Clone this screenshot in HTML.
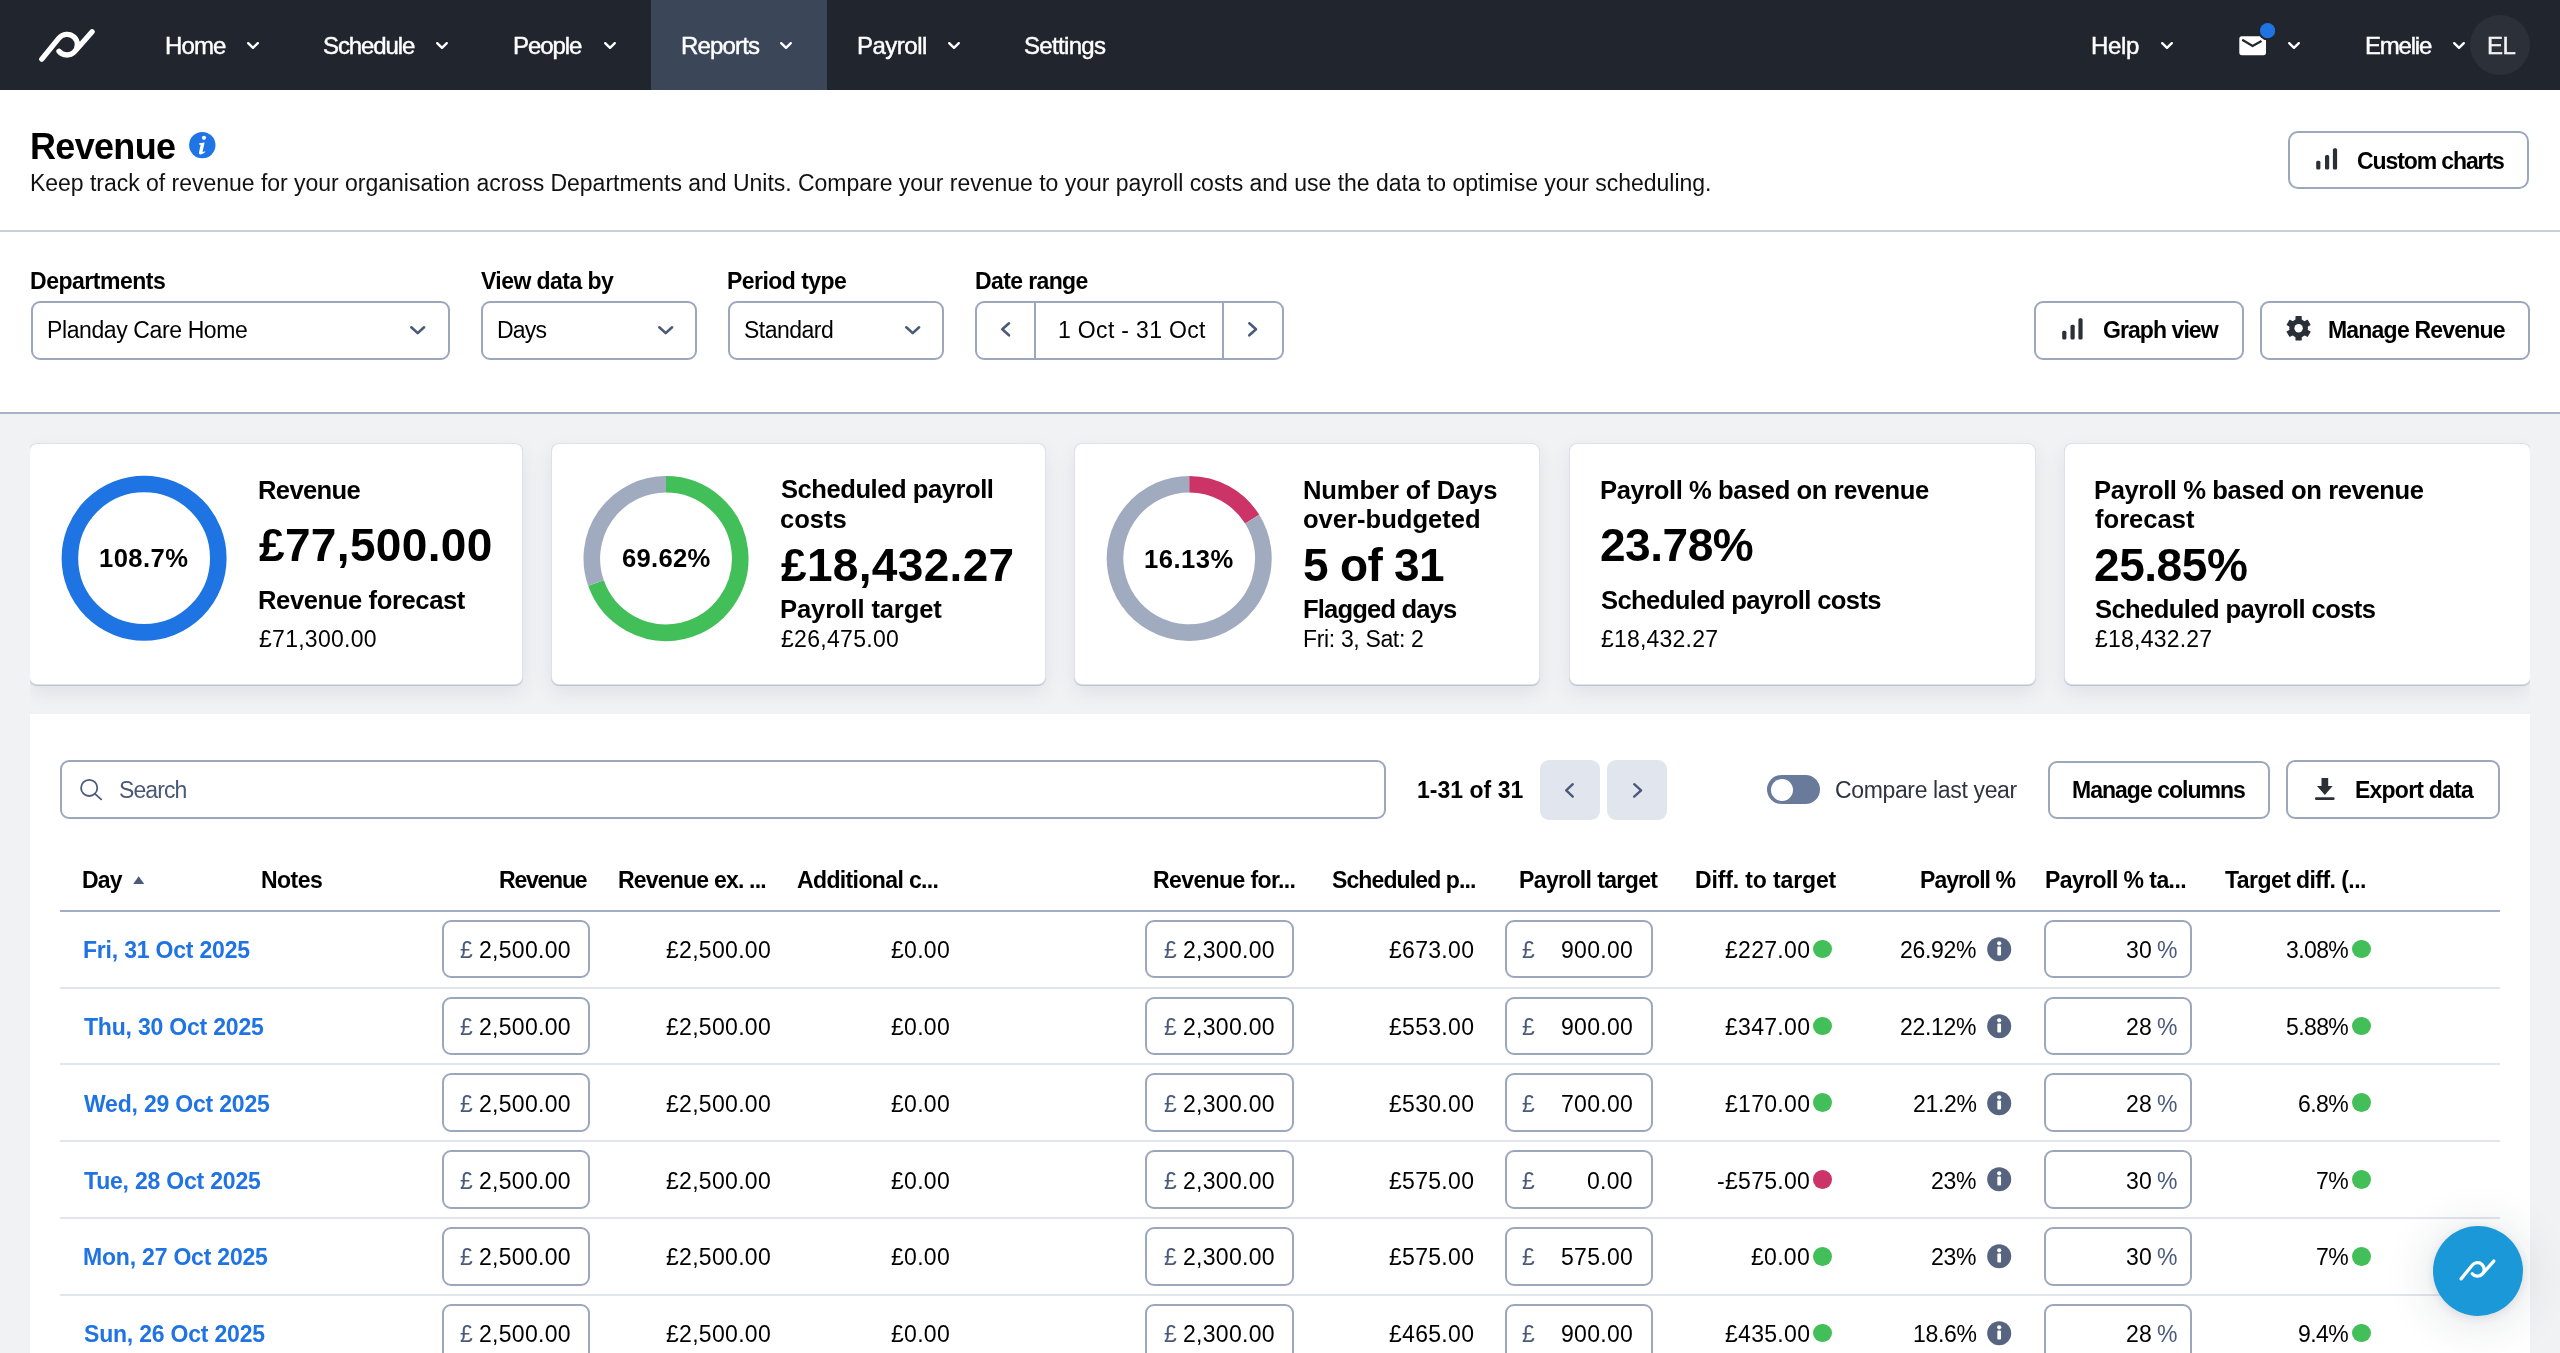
<!DOCTYPE html>
<html><head><meta charset="utf-8"><title>Revenue</title>
<style>
html,body{margin:0;padding:0}
body{width:2560px;height:1353px;overflow:hidden;position:relative;background:#f1f2f4;font-family:"Liberation Sans", sans-serif}
.t{position:absolute;white-space:nowrap;line-height:1;will-change:transform}
</style></head><body>
<div style="position:absolute;left:0.00px;top:0.00px;width:2560.00px;height:90.00px;background:#21252e"></div>
<div style="position:absolute;left:651.00px;top:0.00px;width:176.00px;height:90.00px;background:#3c4659"></div>
<svg style="position:absolute;left:0.00px;top:0.00px;overflow:visible" width="130" height="90" viewBox="0 0 130 90"><path d="M41.8 59.2 L58.9 38.2 A10.35 10.35 0 1 1 59.0 51.2 M74.7 51.6 L92.1 31.8" fill="none" stroke="#fff" stroke-width="5.3" stroke-linecap="round" stroke-linejoin="round"/></svg>
<div class="t" style="left:165.00px;top:33.68px;font-size:24px;color:#fff;letter-spacing:-0.891px;-webkit-text-stroke:0.45px #fff">Home</div>
<div class="t" style="left:323.00px;top:33.68px;font-size:24px;color:#fff;letter-spacing:-1.104px;-webkit-text-stroke:0.45px #fff">Schedule</div>
<div class="t" style="left:513.00px;top:33.68px;font-size:24px;color:#fff;letter-spacing:-1.077px;-webkit-text-stroke:0.45px #fff">People</div>
<div class="t" style="left:680.50px;top:33.68px;font-size:24px;color:#fff;letter-spacing:-0.839px;-webkit-text-stroke:0.45px #fff">Reports</div>
<div class="t" style="left:857.00px;top:33.68px;font-size:24px;color:#fff;letter-spacing:-0.505px;-webkit-text-stroke:0.45px #fff">Payroll</div>
<div class="t" style="left:1024.00px;top:33.68px;font-size:24px;color:#fff;letter-spacing:-0.674px;-webkit-text-stroke:0.45px #fff">Settings</div>
<div class="t" style="left:2091.00px;top:33.68px;font-size:24px;color:#fff;letter-spacing:-0.337px;-webkit-text-stroke:0.45px #fff">Help</div>
<div class="t" style="left:2365.00px;top:33.68px;font-size:24px;color:#fff;letter-spacing:-1.202px;-webkit-text-stroke:0.45px #fff">Emelie</div>
<svg style="position:absolute;left:247.00px;top:42.00px;overflow:visible" width="12" height="7" viewBox="0 0 12 7"><polyline points="1.20,1.20 6.00,5.80 10.80,1.20" fill="none" stroke="#fff" stroke-width="2.4" stroke-linecap="round" stroke-linejoin="round"/></svg>
<svg style="position:absolute;left:436.00px;top:42.00px;overflow:visible" width="12" height="7" viewBox="0 0 12 7"><polyline points="1.20,1.20 6.00,5.80 10.80,1.20" fill="none" stroke="#fff" stroke-width="2.4" stroke-linecap="round" stroke-linejoin="round"/></svg>
<svg style="position:absolute;left:604.00px;top:42.00px;overflow:visible" width="12" height="7" viewBox="0 0 12 7"><polyline points="1.20,1.20 6.00,5.80 10.80,1.20" fill="none" stroke="#fff" stroke-width="2.4" stroke-linecap="round" stroke-linejoin="round"/></svg>
<svg style="position:absolute;left:780.00px;top:42.00px;overflow:visible" width="12" height="7" viewBox="0 0 12 7"><polyline points="1.20,1.20 6.00,5.80 10.80,1.20" fill="none" stroke="#fff" stroke-width="2.4" stroke-linecap="round" stroke-linejoin="round"/></svg>
<svg style="position:absolute;left:948.00px;top:42.00px;overflow:visible" width="12" height="7" viewBox="0 0 12 7"><polyline points="1.20,1.20 6.00,5.80 10.80,1.20" fill="none" stroke="#fff" stroke-width="2.4" stroke-linecap="round" stroke-linejoin="round"/></svg>
<svg style="position:absolute;left:2161.00px;top:42.00px;overflow:visible" width="12" height="7" viewBox="0 0 12 7"><polyline points="1.20,1.20 6.00,5.80 10.80,1.20" fill="none" stroke="#fff" stroke-width="2.4" stroke-linecap="round" stroke-linejoin="round"/></svg>
<svg style="position:absolute;left:2288.00px;top:42.00px;overflow:visible" width="12" height="7" viewBox="0 0 12 7"><polyline points="1.20,1.20 6.00,5.80 10.80,1.20" fill="none" stroke="#fff" stroke-width="2.4" stroke-linecap="round" stroke-linejoin="round"/></svg>
<svg style="position:absolute;left:2453.00px;top:42.00px;overflow:visible" width="12" height="7" viewBox="0 0 12 7"><polyline points="1.20,1.20 6.00,5.80 10.80,1.20" fill="none" stroke="#fff" stroke-width="2.4" stroke-linecap="round" stroke-linejoin="round"/></svg>
<div style="position:absolute;left:2470.00px;top:15.00px;width:60.00px;height:60.00px;background:#2c3039;border-radius:50%"></div>
<div class="t" style="left:2487.00px;top:33.68px;font-size:24px;color:#f2f2f2;letter-spacing:-0.600px;-webkit-text-stroke:0.45px #f2f2f2">EL</div>
<svg style="position:absolute;left:2236.00px;top:22.00px;overflow:visible" width="40" height="40" viewBox="0 0 40 40"><rect x="3.3" y="14.3" width="26.7" height="18.9" rx="2.6" fill="#fff"/>
<polyline points="6.2,17.8 16.6,23.9 25.5,19" fill="none" stroke="#21252e" stroke-width="2.2"/>
<circle cx="31.6" cy="8.7" r="9.6" fill="#21252e"/>
<circle cx="31.6" cy="8.7" r="7.6" fill="#1f73e2"/></svg>
<div style="position:absolute;left:0.00px;top:90.00px;width:2560.00px;height:140.00px;background:#fff"></div>
<div style="position:absolute;left:0.00px;top:230.00px;width:2560.00px;height:2.00px;background:#c9d0dc"></div>
<div class="t" style="left:30.00px;top:128.52px;font-size:36px;color:#000;letter-spacing:-0.674px;font-weight:bold">Revenue</div>
<svg style="position:absolute;left:188.00px;top:131.00px;overflow:visible" width="28" height="28" viewBox="0 0 28 28"><circle cx="14.3" cy="14.1" r="13.2" fill="#1f75e6"/>
<circle cx="16" cy="6.8" r="2.1" fill="#fff"/>
<path d="M11.2 12.2 L16.6 11.6 L14.6 20.5 Q14.5 21.6 16.9 20.2 L17.4 21 Q13.5 24.3 11.6 23.2 Q10.6 22.6 11.2 20.5 L12.6 14 L11.1 13.6 Z" fill="#fff"/></svg>
<div class="t" style="left:30.00px;top:171.53px;font-size:23px;color:#111;letter-spacing:-0.022px">Keep track of revenue for your organisation across Departments and Units. Compare your revenue to your payroll costs and use the data to optimise your scheduling.</div>
<div style="position:absolute;left:2288.00px;top:131.00px;width:241.00px;height:58.00px;border:2px solid #9ca7bc;border-radius:10px;box-sizing:border-box;background:#fff"></div>
<svg style="position:absolute;left:2314.00px;top:147.00px;overflow:visible" width="26" height="24" viewBox="0 0 26 24"><rect x="2.2" y="13.8" width="4.2" height="8.7" rx="1.5" fill="#2b2f38"/><rect x="11" y="7.9" width="4.2" height="14.6" rx="1.5" fill="#2b2f38"/><rect x="18.9" y="1.3" width="4.2" height="21.2" rx="1.5" fill="#2b2f38"/></svg>
<div class="t" style="left:2357.00px;top:149.53px;font-size:23px;color:#000;letter-spacing:-1.104px;font-weight:bold">Custom charts</div>
<div style="position:absolute;left:0.00px;top:232.00px;width:2560.00px;height:180.00px;background:#fff"></div>
<div style="position:absolute;left:0.00px;top:412.00px;width:2560.00px;height:2.00px;background:#a9b3c6"></div>
<div class="t" style="left:30.25px;top:270.13px;font-size:23px;color:#000;letter-spacing:-0.480px;font-weight:bold">Departments</div>
<div class="t" style="left:480.50px;top:270.13px;font-size:23px;color:#000;letter-spacing:-0.556px;font-weight:bold">View data by</div>
<div class="t" style="left:727.00px;top:270.13px;font-size:23px;color:#000;letter-spacing:-0.546px;font-weight:bold">Period type</div>
<div class="t" style="left:975.00px;top:270.13px;font-size:23px;color:#000;letter-spacing:-0.620px;font-weight:bold">Date range</div>
<div style="position:absolute;left:31.00px;top:300.50px;width:418.50px;height:59.00px;border:2px solid #9ca7bc;border-radius:9px;box-sizing:border-box;background:#fff"></div>
<div style="position:absolute;left:480.50px;top:300.50px;width:216.00px;height:59.00px;border:2px solid #9ca7bc;border-radius:9px;box-sizing:border-box;background:#fff"></div>
<div style="position:absolute;left:728.00px;top:300.50px;width:216.00px;height:59.00px;border:2px solid #9ca7bc;border-radius:9px;box-sizing:border-box;background:#fff"></div>
<div style="position:absolute;left:975.00px;top:300.50px;width:308.50px;height:59.00px;border:2px solid #9ca7bc;border-radius:9px;box-sizing:border-box;background:#fff"></div>
<div style="position:absolute;left:1034.30px;top:301.00px;width:2.00px;height:58.00px;background:#9ca7bc"></div>
<div style="position:absolute;left:1221.70px;top:301.00px;width:2.00px;height:58.00px;background:#9ca7bc"></div>
<div class="t" style="left:47.00px;top:318.83px;font-size:23px;color:#000;letter-spacing:-0.394px">Planday Care Home</div>
<div class="t" style="left:496.50px;top:318.83px;font-size:23px;color:#000;letter-spacing:-0.800px">Days</div>
<div class="t" style="left:743.80px;top:318.83px;font-size:23px;color:#000;letter-spacing:-0.508px">Standard</div>
<div class="t" style="left:1058.00px;top:318.83px;font-size:23px;color:#000;letter-spacing:0.326px">1 Oct - 31 Oct</div>
<svg style="position:absolute;left:410.00px;top:326.00px;overflow:visible" width="15.399999999999977" height="8.399999999999977" viewBox="0 0 15.399999999999977 8.399999999999977"><polyline points="1.30,1.30 7.70,7.10 14.10,1.30" fill="none" stroke="#4b5a7b" stroke-width="2.6" stroke-linecap="round" stroke-linejoin="round"/></svg>
<svg style="position:absolute;left:658.00px;top:326.00px;overflow:visible" width="15.399999999999977" height="8.399999999999977" viewBox="0 0 15.399999999999977 8.399999999999977"><polyline points="1.30,1.30 7.70,7.10 14.10,1.30" fill="none" stroke="#4b5a7b" stroke-width="2.6" stroke-linecap="round" stroke-linejoin="round"/></svg>
<svg style="position:absolute;left:905.30px;top:326.00px;overflow:visible" width="15.399999999999977" height="8.399999999999977" viewBox="0 0 15.399999999999977 8.399999999999977"><polyline points="1.30,1.30 7.70,7.10 14.10,1.30" fill="none" stroke="#4b5a7b" stroke-width="2.6" stroke-linecap="round" stroke-linejoin="round"/></svg>
<svg style="position:absolute;left:1000.50px;top:322.40px;overflow:visible" width="9.299999999999955" height="14.600000000000023" viewBox="0 0 9.299999999999955 14.600000000000023"><polyline points="8.00,1.30 1.30,7.30 8.00,13.30" fill="none" stroke="#4b5a7b" stroke-width="2.6" stroke-linecap="round" stroke-linejoin="round"/></svg>
<svg style="position:absolute;left:1248.00px;top:322.40px;overflow:visible" width="9.299999999999955" height="14.600000000000023" viewBox="0 0 9.299999999999955 14.600000000000023"><polyline points="1.30,1.30 8.00,7.30 1.30,13.30" fill="none" stroke="#4b5a7b" stroke-width="2.6" stroke-linecap="round" stroke-linejoin="round"/></svg>
<div style="position:absolute;left:2033.50px;top:300.50px;width:210.50px;height:59.00px;border:2px solid #9ca7bc;border-radius:9px;box-sizing:border-box;background:#fff"></div>
<svg style="position:absolute;left:2060.00px;top:316.00px;overflow:visible" width="26" height="26" viewBox="0 0 26 26"><rect x="2.2" y="14.8" width="4.2" height="8.6" rx="1.5" fill="#2b2f38"/><rect x="10.5" y="8.8" width="4.2" height="14.6" rx="1.5" fill="#2b2f38"/><rect x="18.4" y="2.2" width="4.2" height="21.2" rx="1.5" fill="#2b2f38"/></svg>
<div class="t" style="left:2103.00px;top:318.63px;font-size:23px;color:#000;letter-spacing:-0.933px;font-weight:bold">Graph view</div>
<div style="position:absolute;left:2259.50px;top:300.50px;width:270.50px;height:59.00px;border:2px solid #9ca7bc;border-radius:9px;box-sizing:border-box;background:#fff"></div>
<svg style="position:absolute;left:2286.00px;top:316.40px;overflow:visible" width="25" height="25" viewBox="0 0 25 25"><rect x="9.45" y="0.10" width="6.3" height="6" rx="0.6" fill="#2b2f38" transform="rotate(0 12.6 12.3)"/><rect x="9.45" y="0.10" width="6.3" height="6" rx="0.6" fill="#2b2f38" transform="rotate(60 12.6 12.3)"/><rect x="9.45" y="0.10" width="6.3" height="6" rx="0.6" fill="#2b2f38" transform="rotate(120 12.6 12.3)"/><rect x="9.45" y="0.10" width="6.3" height="6" rx="0.6" fill="#2b2f38" transform="rotate(180 12.6 12.3)"/><rect x="9.45" y="0.10" width="6.3" height="6" rx="0.6" fill="#2b2f38" transform="rotate(240 12.6 12.3)"/><rect x="9.45" y="0.10" width="6.3" height="6" rx="0.6" fill="#2b2f38" transform="rotate(300 12.6 12.3)"/><circle cx="12.6" cy="12.3" r="9.3" fill="#2b2f38"/><circle cx="12.6" cy="12.3" r="4.2" fill="#fff"/></svg>
<div class="t" style="left:2328.00px;top:318.63px;font-size:23px;color:#000;letter-spacing:-0.793px;font-weight:bold">Manage Revenue</div>
<div style="position:absolute;left:30px;top:414px;width:2500px;height:300px;overflow:hidden">
<div style="position:absolute;left:0.00px;top:30px;width:492.00px;height:240px;background:#fff;border-radius:7px;box-shadow:0 0 0 1px #dde1e8, 0 1px 0 1px #bcc4d2, 0 8px 20px rgba(60,72,100,0.10)"></div>
<div style="position:absolute;left:521.50px;top:30px;width:493.50px;height:240px;background:#fff;border-radius:7px;box-shadow:0 0 0 1px #dde1e8, 0 1px 0 1px #bcc4d2, 0 8px 20px rgba(60,72,100,0.10)"></div>
<div style="position:absolute;left:1045.00px;top:30px;width:464.20px;height:240px;background:#fff;border-radius:7px;box-shadow:0 0 0 1px #dde1e8, 0 1px 0 1px #bcc4d2, 0 8px 20px rgba(60,72,100,0.10)"></div>
<div style="position:absolute;left:1539.50px;top:30px;width:465.50px;height:240px;background:#fff;border-radius:7px;box-shadow:0 0 0 1px #dde1e8, 0 1px 0 1px #bcc4d2, 0 8px 20px rgba(60,72,100,0.10)"></div>
<div style="position:absolute;left:2035.00px;top:30px;width:465.00px;height:240px;background:#fff;border-radius:7px;box-shadow:0 0 0 1px #dde1e8, 0 1px 0 1px #bcc4d2, 0 8px 20px rgba(60,72,100,0.10)"></div>
</div>
<svg style="position:absolute;left:0.00px;top:0.00px;overflow:visible" width="2560" height="1353" viewBox="0 0 2560 1353"><circle cx="144.1" cy="558.2" r="74.2" fill="none" stroke="#1f74e3" stroke-width="16.6"/></svg>
<svg style="position:absolute;left:0.00px;top:0.00px;overflow:visible" width="2560" height="1353" viewBox="0 0 2560 1353"><path d="M666.00 484.30 A74.2 74.2 0 1 1 596.00 583.11" fill="none" stroke="#43bf59" stroke-width="16.6"/><path d="M596.00 583.11 A74.2 74.2 0 0 1 666.00 484.30" fill="none" stroke="#a1abc0" stroke-width="16.6"/></svg>
<svg style="position:absolute;left:0.00px;top:0.00px;overflow:visible" width="2560" height="1353" viewBox="0 0 2560 1353"><path d="M1189.20 484.20 A74.2 74.2 0 0 1 1252.17 519.15" fill="none" stroke="#cc3366" stroke-width="16.6"/><path d="M1252.17 519.15 A74.2 74.2 0 1 1 1189.20 484.20" fill="none" stroke="#a1abc0" stroke-width="16.6"/></svg>
<div class="t" style="left:99.20px;top:546.32px;font-size:25.6px;color:#000;letter-spacing:0.451px;font-weight:bold">108.7%</div>
<div class="t" style="left:622.00px;top:546.32px;font-size:25.6px;color:#000;letter-spacing:0.311px;font-weight:bold">69.62%</div>
<div class="t" style="left:1143.80px;top:546.82px;font-size:25.6px;color:#000;letter-spacing:0.471px;font-weight:bold">16.13%</div>
<div class="t" style="left:258.40px;top:477.92px;font-size:25.6px;color:#000;letter-spacing:-0.642px;font-weight:bold">Revenue</div>
<div class="t" style="left:259.00px;top:522.25px;font-size:46px;color:#000;letter-spacing:0.340px;font-weight:bold">£77,500.00</div>
<div class="t" style="left:258.00px;top:588.12px;font-size:25.6px;color:#000;letter-spacing:-0.403px;font-weight:bold">Revenue forecast</div>
<div class="t" style="left:259.00px;top:627.53px;font-size:23px;color:#000;letter-spacing:0.275px">£71,300.00</div>
<div class="t" style="left:781.40px;top:477.32px;font-size:25.6px;color:#000;letter-spacing:-0.471px;font-weight:bold">Scheduled payroll</div>
<div class="t" style="left:780.40px;top:507.32px;font-size:25.6px;color:#000;letter-spacing:0.000px;font-weight:bold">costs</div>
<div class="t" style="left:781.00px;top:542.05px;font-size:46px;color:#000;letter-spacing:0.329px;font-weight:bold">£18,432.27</div>
<div class="t" style="left:780.40px;top:597.32px;font-size:25.6px;color:#000;letter-spacing:-0.135px;font-weight:bold">Payroll target</div>
<div class="t" style="left:781.00px;top:627.53px;font-size:23px;color:#000;letter-spacing:0.298px">£26,475.00</div>
<div class="t" style="left:1302.80px;top:477.72px;font-size:25.6px;color:#000;letter-spacing:-0.141px;font-weight:bold">Number of Days</div>
<div class="t" style="left:1302.80px;top:507.12px;font-size:25.6px;color:#000;letter-spacing:-0.009px;font-weight:bold">over-budgeted</div>
<div class="t" style="left:1302.80px;top:542.25px;font-size:46px;color:#000;letter-spacing:-0.691px;font-weight:bold">5 of 31</div>
<div class="t" style="left:1302.80px;top:596.82px;font-size:25.6px;color:#000;letter-spacing:-0.848px;font-weight:bold">Flagged days</div>
<div class="t" style="left:1302.80px;top:628.03px;font-size:23px;color:#000;letter-spacing:-0.344px">Fri: 3, Sat: 2</div>
<div class="t" style="left:1599.50px;top:477.82px;font-size:25.6px;color:#000;letter-spacing:-0.429px;font-weight:bold">Payroll % based on revenue</div>
<div class="t" style="left:1599.50px;top:522.05px;font-size:46px;color:#000;letter-spacing:-0.462px;font-weight:bold">23.78%</div>
<div class="t" style="left:1600.50px;top:587.52px;font-size:25.6px;color:#000;letter-spacing:-0.631px;font-weight:bold">Scheduled payroll costs</div>
<div class="t" style="left:1600.50px;top:627.83px;font-size:23px;color:#000;letter-spacing:0.209px">£18,432.27</div>
<div class="t" style="left:2094.30px;top:477.82px;font-size:25.6px;color:#000;letter-spacing:-0.401px;font-weight:bold">Payroll % based on revenue</div>
<div class="t" style="left:2095.30px;top:507.42px;font-size:25.6px;color:#000;letter-spacing:0.000px;font-weight:bold">forecast</div>
<div class="t" style="left:2094.30px;top:541.75px;font-size:46px;color:#000;letter-spacing:-0.442px;font-weight:bold">25.85%</div>
<div class="t" style="left:2095.30px;top:597.22px;font-size:25.6px;color:#000;letter-spacing:-0.613px;font-weight:bold">Scheduled payroll costs</div>
<div class="t" style="left:2095.30px;top:627.83px;font-size:23px;color:#000;letter-spacing:0.220px">£18,432.27</div>
<div style="position:absolute;left:30.00px;top:714.00px;width:2500.00px;height:639.00px;background:#fff"></div>
<div style="position:absolute;left:60.00px;top:759.50px;width:1326.00px;height:59.50px;border:2px solid #9ca7bc;border-radius:9px;box-sizing:border-box;background:#fff"></div>
<svg style="position:absolute;left:76.00px;top:775.00px;overflow:visible" width="30" height="30" viewBox="0 0 30 30"><circle cx="13.2" cy="12.9" r="8.1" fill="none" stroke="#4b5a7b" stroke-width="1.8"/><line x1="19" y1="18.8" x2="25.2" y2="24.4" stroke="#4b5a7b" stroke-width="1.8" stroke-linecap="round"/></svg>
<div class="t" style="left:119.00px;top:778.83px;font-size:23px;color:#4a5877;letter-spacing:-0.897px">Search</div>
<div class="t" style="left:1416.50px;top:778.53px;font-size:23px;color:#000;letter-spacing:0.021px;font-weight:bold">1-31 of 31</div>
<div style="position:absolute;left:1539.75px;top:760.00px;width:59.75px;height:59.70px;background:#e1e5ee;border-radius:9px"></div>
<div style="position:absolute;left:1607.25px;top:760.00px;width:59.75px;height:59.70px;background:#e1e5ee;border-radius:9px"></div>
<svg style="position:absolute;left:1565.00px;top:782.50px;overflow:visible" width="9" height="14.799999999999955" viewBox="0 0 9 14.799999999999955"><polyline points="7.80,1.20 1.20,7.40 7.80,13.60" fill="none" stroke="#4b5a7b" stroke-width="2.4" stroke-linecap="round" stroke-linejoin="round"/></svg>
<svg style="position:absolute;left:1632.60px;top:782.50px;overflow:visible" width="9.300000000000182" height="14.799999999999955" viewBox="0 0 9.300000000000182 14.799999999999955"><polyline points="1.20,1.20 8.10,7.40 1.20,13.60" fill="none" stroke="#4b5a7b" stroke-width="2.4" stroke-linecap="round" stroke-linejoin="round"/></svg>
<div style="position:absolute;left:1767.20px;top:774.80px;width:52.60px;height:29.70px;background:#6a7a9b;border-radius:15px"></div>
<div style="position:absolute;left:1771px;top:778.6px;width:22.4px;height:22.4px;background:#fff;border-radius:50%"></div>
<div class="t" style="left:1834.50px;top:778.53px;font-size:23px;color:#2f3441;letter-spacing:-0.359px">Compare last year</div>
<div style="position:absolute;left:2048.00px;top:760.50px;width:221.50px;height:58.80px;border:2px solid #9ca7bc;border-radius:9px;box-sizing:border-box;background:#fff"></div>
<div class="t" style="left:2072.30px;top:778.83px;font-size:23px;color:#000;letter-spacing:-0.985px;font-weight:bold">Manage columns</div>
<div style="position:absolute;left:2285.80px;top:760.30px;width:213.90px;height:59.20px;border:2px solid #9ca7bc;border-radius:9px;box-sizing:border-box;background:#fff"></div>
<svg style="position:absolute;left:2312.00px;top:776.00px;overflow:visible" width="26" height="26" viewBox="0 0 26 26"><path d="M9.5 2 H16.2 V10 H20.6 L12.85 19 L5 10 H9.5 Z" fill="#2b2f38"/><rect x="3" y="21.3" width="19.6" height="2.6" rx="1.2" fill="#2b2f38"/></svg>
<div class="t" style="left:2355.40px;top:779.03px;font-size:23px;color:#000;letter-spacing:-0.773px;font-weight:bold">Export data</div>
<div class="t" style="left:82.30px;top:868.53px;font-size:23px;color:#000;letter-spacing:-0.851px;font-weight:bold">Day</div>
<svg style="position:absolute;left:132.00px;top:875.00px;overflow:visible" width="14" height="10" viewBox="0 0 14 10"><path d="M1.2 9 L6.7 1.2 L12.2 9 Z" fill="#4b5a7b"/></svg>
<div class="t" style="left:261.00px;top:868.53px;font-size:23px;color:#000;letter-spacing:-0.527px;font-weight:bold">Notes</div>
<div class="t" style="left:499.00px;top:868.53px;font-size:23px;color:#000;letter-spacing:-1.231px;font-weight:bold">Revenue</div>
<div class="t" style="left:617.70px;top:868.53px;font-size:23px;color:#000;letter-spacing:-0.793px;font-weight:bold">Revenue ex. ...</div>
<div class="t" style="left:796.70px;top:868.53px;font-size:23px;color:#000;letter-spacing:-0.628px;font-weight:bold">Additional c...</div>
<div class="t" style="left:1152.80px;top:868.53px;font-size:23px;color:#000;letter-spacing:-0.603px;font-weight:bold">Revenue for...</div>
<div class="t" style="left:1331.80px;top:868.53px;font-size:23px;color:#000;letter-spacing:-0.886px;font-weight:bold">Scheduled p...</div>
<div class="t" style="left:1518.70px;top:868.53px;font-size:23px;color:#000;letter-spacing:-0.618px;font-weight:bold">Payroll target</div>
<div class="t" style="left:1695.00px;top:868.53px;font-size:23px;color:#000;letter-spacing:-0.131px;font-weight:bold">Diff. to target</div>
<div class="t" style="left:1919.50px;top:868.53px;font-size:23px;color:#000;letter-spacing:-0.949px;font-weight:bold">Payroll %</div>
<div class="t" style="left:2045.25px;top:868.53px;font-size:23px;color:#000;letter-spacing:-0.565px;font-weight:bold">Payroll % ta...</div>
<div class="t" style="left:2225.00px;top:868.53px;font-size:23px;color:#000;letter-spacing:-0.560px;font-weight:bold">Target diff. (...</div>
<div style="position:absolute;left:60.00px;top:910.00px;width:2440.00px;height:2.00px;background:#a3adc1"></div>
<div class="t" style="left:82.50px;top:939.13px;font-size:23px;color:#1f73e2;letter-spacing:-0.200px;font-weight:bold">Fri, 31 Oct 2025</div>
<div style="position:absolute;left:441.80px;top:919.80px;width:148.40px;height:58.60px;border:2px solid #9ca7bc;border-radius:9px;box-sizing:border-box;background:#fff"></div>
<div style="position:absolute;left:1145.40px;top:919.80px;width:149.00px;height:58.60px;border:2px solid #9ca7bc;border-radius:9px;box-sizing:border-box;background:#fff"></div>
<div style="position:absolute;left:1505.40px;top:919.80px;width:148.00px;height:58.60px;border:2px solid #9ca7bc;border-radius:9px;box-sizing:border-box;background:#fff"></div>
<div style="position:absolute;left:2044.25px;top:919.80px;width:147.75px;height:58.60px;border:2px solid #9ca7bc;border-radius:9px;box-sizing:border-box;background:#fff"></div>
<div class="t" style="left:460.00px;top:939.13px;font-size:23px;color:#4b5a7b;letter-spacing:0.000px">£</div>
<div class="t" style="left:478.96px;top:939.13px;font-size:23px;color:#000;letter-spacing:0.300px">2,500.00</div>
<div class="t" style="left:666.07px;top:939.13px;font-size:23px;color:#000;letter-spacing:0.300px">£2,500.00</div>
<div class="t" style="left:891.44px;top:939.13px;font-size:23px;color:#000;letter-spacing:0.300px">£0.00</div>
<div class="t" style="left:1163.70px;top:939.13px;font-size:23px;color:#4b5a7b;letter-spacing:0.000px">£</div>
<div class="t" style="left:1182.56px;top:939.13px;font-size:23px;color:#000;letter-spacing:0.300px">2,300.00</div>
<div class="t" style="left:1389.45px;top:939.13px;font-size:23px;color:#000;letter-spacing:0.300px">£673.00</div>
<div class="t" style="left:1522.00px;top:939.13px;font-size:23px;color:#4b5a7b;letter-spacing:0.000px">£</div>
<div class="t" style="left:1561.14px;top:939.13px;font-size:23px;color:#000;letter-spacing:0.300px">900.00</div>
<div class="t" style="left:1724.85px;top:939.13px;font-size:23px;color:#000;letter-spacing:0.300px">£227.00</div>
<div style="position:absolute;left:1813.40px;top:939.70px;width:18.8px;height:18.8px;border-radius:50%;background:#43bf59"></div>
<div class="t" style="left:1900.19px;top:939.13px;font-size:23px;color:#000;letter-spacing:-0.300px">26.92%</div>
<svg style="position:absolute;left:1986.50px;top:936.90px;overflow:visible" width="24.4" height="24.4" viewBox="0 0 24.4 24.4"><circle cx="12.2" cy="12.2" r="12" fill="#56647f"/><circle cx="12.2" cy="6.3" r="2.1" fill="#fff"/><rect x="10.35" y="9.6" width="3.7" height="9" rx="0.8" fill="#fff"/></svg>
<div class="t" style="left:2125.66px;top:939.13px;font-size:23px;color:#000;letter-spacing:0.300px">30</div>
<div class="t" style="left:2157.00px;top:939.13px;font-size:23px;color:#4b5a7b;letter-spacing:0.000px">%</div>
<div class="t" style="left:2285.64px;top:939.13px;font-size:23px;color:#000;letter-spacing:-0.600px">3.08%</div>
<div style="position:absolute;left:2351.85px;top:939.70px;width:18.8px;height:18.8px;border-radius:50%;background:#43bf59"></div>
<div style="position:absolute;left:60.00px;top:986.50px;width:2440.00px;height:2.00px;background:#e1e5ec"></div>
<div class="t" style="left:83.50px;top:1015.93px;font-size:23px;color:#1f73e2;letter-spacing:-0.200px;font-weight:bold">Thu, 30 Oct 2025</div>
<div style="position:absolute;left:441.80px;top:996.60px;width:148.40px;height:58.60px;border:2px solid #9ca7bc;border-radius:9px;box-sizing:border-box;background:#fff"></div>
<div style="position:absolute;left:1145.40px;top:996.60px;width:149.00px;height:58.60px;border:2px solid #9ca7bc;border-radius:9px;box-sizing:border-box;background:#fff"></div>
<div style="position:absolute;left:1505.40px;top:996.60px;width:148.00px;height:58.60px;border:2px solid #9ca7bc;border-radius:9px;box-sizing:border-box;background:#fff"></div>
<div style="position:absolute;left:2044.25px;top:996.60px;width:147.75px;height:58.60px;border:2px solid #9ca7bc;border-radius:9px;box-sizing:border-box;background:#fff"></div>
<div class="t" style="left:460.00px;top:1015.93px;font-size:23px;color:#4b5a7b;letter-spacing:0.000px">£</div>
<div class="t" style="left:478.96px;top:1015.93px;font-size:23px;color:#000;letter-spacing:0.300px">2,500.00</div>
<div class="t" style="left:666.07px;top:1015.93px;font-size:23px;color:#000;letter-spacing:0.300px">£2,500.00</div>
<div class="t" style="left:891.44px;top:1015.93px;font-size:23px;color:#000;letter-spacing:0.300px">£0.00</div>
<div class="t" style="left:1163.70px;top:1015.93px;font-size:23px;color:#4b5a7b;letter-spacing:0.000px">£</div>
<div class="t" style="left:1182.56px;top:1015.93px;font-size:23px;color:#000;letter-spacing:0.300px">2,300.00</div>
<div class="t" style="left:1389.45px;top:1015.93px;font-size:23px;color:#000;letter-spacing:0.300px">£553.00</div>
<div class="t" style="left:1522.00px;top:1015.93px;font-size:23px;color:#4b5a7b;letter-spacing:0.000px">£</div>
<div class="t" style="left:1561.14px;top:1015.93px;font-size:23px;color:#000;letter-spacing:0.300px">900.00</div>
<div class="t" style="left:1724.85px;top:1015.93px;font-size:23px;color:#000;letter-spacing:0.300px">£347.00</div>
<div style="position:absolute;left:1813.40px;top:1016.50px;width:18.8px;height:18.8px;border-radius:50%;background:#43bf59"></div>
<div class="t" style="left:1900.19px;top:1015.93px;font-size:23px;color:#000;letter-spacing:-0.300px">22.12%</div>
<svg style="position:absolute;left:1986.50px;top:1013.70px;overflow:visible" width="24.4" height="24.4" viewBox="0 0 24.4 24.4"><circle cx="12.2" cy="12.2" r="12" fill="#56647f"/><circle cx="12.2" cy="6.3" r="2.1" fill="#fff"/><rect x="10.35" y="9.6" width="3.7" height="9" rx="0.8" fill="#fff"/></svg>
<div class="t" style="left:2125.66px;top:1015.93px;font-size:23px;color:#000;letter-spacing:0.300px">28</div>
<div class="t" style="left:2157.00px;top:1015.93px;font-size:23px;color:#4b5a7b;letter-spacing:0.000px">%</div>
<div class="t" style="left:2285.64px;top:1015.93px;font-size:23px;color:#000;letter-spacing:-0.600px">5.88%</div>
<div style="position:absolute;left:2351.85px;top:1016.50px;width:18.8px;height:18.8px;border-radius:50%;background:#43bf59"></div>
<div style="position:absolute;left:60.00px;top:1063.30px;width:2440.00px;height:2.00px;background:#e1e5ec"></div>
<div class="t" style="left:83.50px;top:1092.73px;font-size:23px;color:#1f73e2;letter-spacing:-0.200px;font-weight:bold">Wed, 29 Oct 2025</div>
<div style="position:absolute;left:441.80px;top:1073.40px;width:148.40px;height:58.60px;border:2px solid #9ca7bc;border-radius:9px;box-sizing:border-box;background:#fff"></div>
<div style="position:absolute;left:1145.40px;top:1073.40px;width:149.00px;height:58.60px;border:2px solid #9ca7bc;border-radius:9px;box-sizing:border-box;background:#fff"></div>
<div style="position:absolute;left:1505.40px;top:1073.40px;width:148.00px;height:58.60px;border:2px solid #9ca7bc;border-radius:9px;box-sizing:border-box;background:#fff"></div>
<div style="position:absolute;left:2044.25px;top:1073.40px;width:147.75px;height:58.60px;border:2px solid #9ca7bc;border-radius:9px;box-sizing:border-box;background:#fff"></div>
<div class="t" style="left:460.00px;top:1092.73px;font-size:23px;color:#4b5a7b;letter-spacing:0.000px">£</div>
<div class="t" style="left:478.96px;top:1092.73px;font-size:23px;color:#000;letter-spacing:0.300px">2,500.00</div>
<div class="t" style="left:666.07px;top:1092.73px;font-size:23px;color:#000;letter-spacing:0.300px">£2,500.00</div>
<div class="t" style="left:891.44px;top:1092.73px;font-size:23px;color:#000;letter-spacing:0.300px">£0.00</div>
<div class="t" style="left:1163.70px;top:1092.73px;font-size:23px;color:#4b5a7b;letter-spacing:0.000px">£</div>
<div class="t" style="left:1182.56px;top:1092.73px;font-size:23px;color:#000;letter-spacing:0.300px">2,300.00</div>
<div class="t" style="left:1389.45px;top:1092.73px;font-size:23px;color:#000;letter-spacing:0.300px">£530.00</div>
<div class="t" style="left:1522.00px;top:1092.73px;font-size:23px;color:#4b5a7b;letter-spacing:0.000px">£</div>
<div class="t" style="left:1561.14px;top:1092.73px;font-size:23px;color:#000;letter-spacing:0.300px">700.00</div>
<div class="t" style="left:1724.85px;top:1092.73px;font-size:23px;color:#000;letter-spacing:0.300px">£170.00</div>
<div style="position:absolute;left:1813.40px;top:1093.30px;width:18.8px;height:18.8px;border-radius:50%;background:#43bf59"></div>
<div class="t" style="left:1912.69px;top:1092.73px;font-size:23px;color:#000;letter-spacing:-0.300px">21.2%</div>
<svg style="position:absolute;left:1986.50px;top:1090.50px;overflow:visible" width="24.4" height="24.4" viewBox="0 0 24.4 24.4"><circle cx="12.2" cy="12.2" r="12" fill="#56647f"/><circle cx="12.2" cy="6.3" r="2.1" fill="#fff"/><rect x="10.35" y="9.6" width="3.7" height="9" rx="0.8" fill="#fff"/></svg>
<div class="t" style="left:2125.66px;top:1092.73px;font-size:23px;color:#000;letter-spacing:0.300px">28</div>
<div class="t" style="left:2157.00px;top:1092.73px;font-size:23px;color:#4b5a7b;letter-spacing:0.000px">%</div>
<div class="t" style="left:2297.83px;top:1092.73px;font-size:23px;color:#000;letter-spacing:-0.600px">6.8%</div>
<div style="position:absolute;left:2351.85px;top:1093.30px;width:18.8px;height:18.8px;border-radius:50%;background:#43bf59"></div>
<div style="position:absolute;left:60.00px;top:1140.10px;width:2440.00px;height:2.00px;background:#e1e5ec"></div>
<div class="t" style="left:83.50px;top:1169.53px;font-size:23px;color:#1f73e2;letter-spacing:-0.200px;font-weight:bold">Tue, 28 Oct 2025</div>
<div style="position:absolute;left:441.80px;top:1150.20px;width:148.40px;height:58.60px;border:2px solid #9ca7bc;border-radius:9px;box-sizing:border-box;background:#fff"></div>
<div style="position:absolute;left:1145.40px;top:1150.20px;width:149.00px;height:58.60px;border:2px solid #9ca7bc;border-radius:9px;box-sizing:border-box;background:#fff"></div>
<div style="position:absolute;left:1505.40px;top:1150.20px;width:148.00px;height:58.60px;border:2px solid #9ca7bc;border-radius:9px;box-sizing:border-box;background:#fff"></div>
<div style="position:absolute;left:2044.25px;top:1150.20px;width:147.75px;height:58.60px;border:2px solid #9ca7bc;border-radius:9px;box-sizing:border-box;background:#fff"></div>
<div class="t" style="left:460.00px;top:1169.53px;font-size:23px;color:#4b5a7b;letter-spacing:0.000px">£</div>
<div class="t" style="left:478.96px;top:1169.53px;font-size:23px;color:#000;letter-spacing:0.300px">2,500.00</div>
<div class="t" style="left:666.07px;top:1169.53px;font-size:23px;color:#000;letter-spacing:0.300px">£2,500.00</div>
<div class="t" style="left:891.44px;top:1169.53px;font-size:23px;color:#000;letter-spacing:0.300px">£0.00</div>
<div class="t" style="left:1163.70px;top:1169.53px;font-size:23px;color:#4b5a7b;letter-spacing:0.000px">£</div>
<div class="t" style="left:1182.56px;top:1169.53px;font-size:23px;color:#000;letter-spacing:0.300px">2,300.00</div>
<div class="t" style="left:1389.45px;top:1169.53px;font-size:23px;color:#000;letter-spacing:0.300px">£575.00</div>
<div class="t" style="left:1522.00px;top:1169.53px;font-size:23px;color:#4b5a7b;letter-spacing:0.000px">£</div>
<div class="t" style="left:1587.33px;top:1169.53px;font-size:23px;color:#000;letter-spacing:0.300px">0.00</div>
<div class="t" style="left:1716.89px;top:1169.53px;font-size:23px;color:#000;letter-spacing:0.300px">-£575.00</div>
<div style="position:absolute;left:1813.40px;top:1170.10px;width:18.8px;height:18.8px;border-radius:50%;background:#cc3366"></div>
<div class="t" style="left:1931.27px;top:1169.53px;font-size:23px;color:#000;letter-spacing:-0.300px">23%</div>
<svg style="position:absolute;left:1986.50px;top:1167.30px;overflow:visible" width="24.4" height="24.4" viewBox="0 0 24.4 24.4"><circle cx="12.2" cy="12.2" r="12" fill="#56647f"/><circle cx="12.2" cy="6.3" r="2.1" fill="#fff"/><rect x="10.35" y="9.6" width="3.7" height="9" rx="0.8" fill="#fff"/></svg>
<div class="t" style="left:2125.66px;top:1169.53px;font-size:23px;color:#000;letter-spacing:0.300px">30</div>
<div class="t" style="left:2157.00px;top:1169.53px;font-size:23px;color:#4b5a7b;letter-spacing:0.000px">%</div>
<div class="t" style="left:2315.81px;top:1169.53px;font-size:23px;color:#000;letter-spacing:-0.600px">7%</div>
<div style="position:absolute;left:2351.85px;top:1170.10px;width:18.8px;height:18.8px;border-radius:50%;background:#43bf59"></div>
<div style="position:absolute;left:60.00px;top:1216.90px;width:2440.00px;height:2.00px;background:#e1e5ec"></div>
<div class="t" style="left:82.50px;top:1246.33px;font-size:23px;color:#1f73e2;letter-spacing:-0.200px;font-weight:bold">Mon, 27 Oct 2025</div>
<div style="position:absolute;left:441.80px;top:1227.00px;width:148.40px;height:58.60px;border:2px solid #9ca7bc;border-radius:9px;box-sizing:border-box;background:#fff"></div>
<div style="position:absolute;left:1145.40px;top:1227.00px;width:149.00px;height:58.60px;border:2px solid #9ca7bc;border-radius:9px;box-sizing:border-box;background:#fff"></div>
<div style="position:absolute;left:1505.40px;top:1227.00px;width:148.00px;height:58.60px;border:2px solid #9ca7bc;border-radius:9px;box-sizing:border-box;background:#fff"></div>
<div style="position:absolute;left:2044.25px;top:1227.00px;width:147.75px;height:58.60px;border:2px solid #9ca7bc;border-radius:9px;box-sizing:border-box;background:#fff"></div>
<div class="t" style="left:460.00px;top:1246.33px;font-size:23px;color:#4b5a7b;letter-spacing:0.000px">£</div>
<div class="t" style="left:478.96px;top:1246.33px;font-size:23px;color:#000;letter-spacing:0.300px">2,500.00</div>
<div class="t" style="left:666.07px;top:1246.33px;font-size:23px;color:#000;letter-spacing:0.300px">£2,500.00</div>
<div class="t" style="left:891.44px;top:1246.33px;font-size:23px;color:#000;letter-spacing:0.300px">£0.00</div>
<div class="t" style="left:1163.70px;top:1246.33px;font-size:23px;color:#4b5a7b;letter-spacing:0.000px">£</div>
<div class="t" style="left:1182.56px;top:1246.33px;font-size:23px;color:#000;letter-spacing:0.300px">2,300.00</div>
<div class="t" style="left:1389.45px;top:1246.33px;font-size:23px;color:#000;letter-spacing:0.300px">£575.00</div>
<div class="t" style="left:1522.00px;top:1246.33px;font-size:23px;color:#4b5a7b;letter-spacing:0.000px">£</div>
<div class="t" style="left:1561.14px;top:1246.33px;font-size:23px;color:#000;letter-spacing:0.300px">575.00</div>
<div class="t" style="left:1751.04px;top:1246.33px;font-size:23px;color:#000;letter-spacing:0.300px">£0.00</div>
<div style="position:absolute;left:1813.40px;top:1246.90px;width:18.8px;height:18.8px;border-radius:50%;background:#43bf59"></div>
<div class="t" style="left:1931.27px;top:1246.33px;font-size:23px;color:#000;letter-spacing:-0.300px">23%</div>
<svg style="position:absolute;left:1986.50px;top:1244.10px;overflow:visible" width="24.4" height="24.4" viewBox="0 0 24.4 24.4"><circle cx="12.2" cy="12.2" r="12" fill="#56647f"/><circle cx="12.2" cy="6.3" r="2.1" fill="#fff"/><rect x="10.35" y="9.6" width="3.7" height="9" rx="0.8" fill="#fff"/></svg>
<div class="t" style="left:2125.66px;top:1246.33px;font-size:23px;color:#000;letter-spacing:0.300px">30</div>
<div class="t" style="left:2157.00px;top:1246.33px;font-size:23px;color:#4b5a7b;letter-spacing:0.000px">%</div>
<div class="t" style="left:2315.81px;top:1246.33px;font-size:23px;color:#000;letter-spacing:-0.600px">7%</div>
<div style="position:absolute;left:2351.85px;top:1246.90px;width:18.8px;height:18.8px;border-radius:50%;background:#43bf59"></div>
<div style="position:absolute;left:60.00px;top:1293.70px;width:2440.00px;height:2.00px;background:#e1e5ec"></div>
<div class="t" style="left:83.50px;top:1323.13px;font-size:23px;color:#1f73e2;letter-spacing:-0.200px;font-weight:bold">Sun, 26 Oct 2025</div>
<div style="position:absolute;left:441.80px;top:1303.80px;width:148.40px;height:58.60px;border:2px solid #9ca7bc;border-radius:9px;box-sizing:border-box;background:#fff"></div>
<div style="position:absolute;left:1145.40px;top:1303.80px;width:149.00px;height:58.60px;border:2px solid #9ca7bc;border-radius:9px;box-sizing:border-box;background:#fff"></div>
<div style="position:absolute;left:1505.40px;top:1303.80px;width:148.00px;height:58.60px;border:2px solid #9ca7bc;border-radius:9px;box-sizing:border-box;background:#fff"></div>
<div style="position:absolute;left:2044.25px;top:1303.80px;width:147.75px;height:58.60px;border:2px solid #9ca7bc;border-radius:9px;box-sizing:border-box;background:#fff"></div>
<div class="t" style="left:460.00px;top:1323.13px;font-size:23px;color:#4b5a7b;letter-spacing:0.000px">£</div>
<div class="t" style="left:478.96px;top:1323.13px;font-size:23px;color:#000;letter-spacing:0.300px">2,500.00</div>
<div class="t" style="left:666.07px;top:1323.13px;font-size:23px;color:#000;letter-spacing:0.300px">£2,500.00</div>
<div class="t" style="left:891.44px;top:1323.13px;font-size:23px;color:#000;letter-spacing:0.300px">£0.00</div>
<div class="t" style="left:1163.70px;top:1323.13px;font-size:23px;color:#4b5a7b;letter-spacing:0.000px">£</div>
<div class="t" style="left:1182.56px;top:1323.13px;font-size:23px;color:#000;letter-spacing:0.300px">2,300.00</div>
<div class="t" style="left:1389.45px;top:1323.13px;font-size:23px;color:#000;letter-spacing:0.300px">£465.00</div>
<div class="t" style="left:1522.00px;top:1323.13px;font-size:23px;color:#4b5a7b;letter-spacing:0.000px">£</div>
<div class="t" style="left:1561.14px;top:1323.13px;font-size:23px;color:#000;letter-spacing:0.300px">900.00</div>
<div class="t" style="left:1724.85px;top:1323.13px;font-size:23px;color:#000;letter-spacing:0.300px">£435.00</div>
<div style="position:absolute;left:1813.40px;top:1323.70px;width:18.8px;height:18.8px;border-radius:50%;background:#43bf59"></div>
<div class="t" style="left:1912.69px;top:1323.13px;font-size:23px;color:#000;letter-spacing:-0.300px">18.6%</div>
<svg style="position:absolute;left:1986.50px;top:1320.90px;overflow:visible" width="24.4" height="24.4" viewBox="0 0 24.4 24.4"><circle cx="12.2" cy="12.2" r="12" fill="#56647f"/><circle cx="12.2" cy="6.3" r="2.1" fill="#fff"/><rect x="10.35" y="9.6" width="3.7" height="9" rx="0.8" fill="#fff"/></svg>
<div class="t" style="left:2125.66px;top:1323.13px;font-size:23px;color:#000;letter-spacing:0.300px">28</div>
<div class="t" style="left:2157.00px;top:1323.13px;font-size:23px;color:#4b5a7b;letter-spacing:0.000px">%</div>
<div class="t" style="left:2297.83px;top:1323.13px;font-size:23px;color:#000;letter-spacing:-0.600px">9.4%</div>
<div style="position:absolute;left:2351.85px;top:1323.70px;width:18.8px;height:18.8px;border-radius:50%;background:#43bf59"></div>
<div style="position:absolute;left:2432.5px;top:1225.5px;width:90px;height:90px;border-radius:50%;background:#1a98d8;box-shadow:0 4px 50px rgba(40,50,70,0.16), 0 2px 8px rgba(40,50,70,0.10)"></div>
<svg style="position:absolute;left:2440.00px;top:1235.00px;overflow:visible" width="80" height="80" viewBox="0 0 80 80"><g transform="translate(-6.1 5.4) scale(0.65)"><path d="M41.8 59.2 L58.9 38.2 A10.35 10.35 0 1 1 59.0 51.2 M74.7 51.6 L92.1 31.8" fill="none" stroke="#fff" stroke-width="5" stroke-linecap="round" stroke-linejoin="round"/></g></svg>
</body></html>
